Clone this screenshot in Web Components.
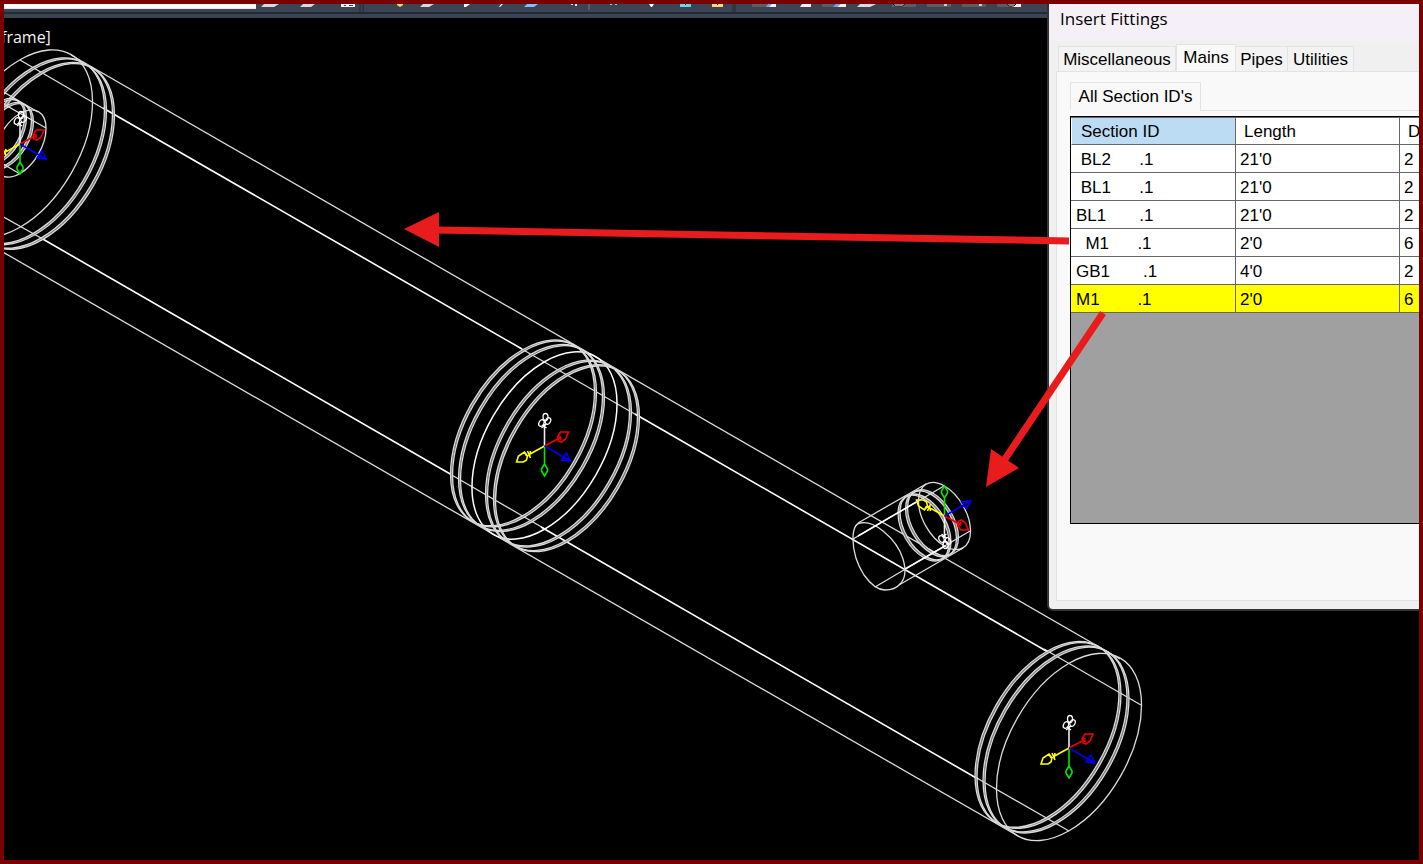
<!DOCTYPE html>
<html lang="en">
<head>
<meta charset="utf-8">
<title>Insert Fittings</title>
<style>
html, body { height: 100%; margin: 0; }
body { background: #000; font-family: "Liberation Sans", Arial, sans-serif; font-size: 17px; }
</style>
</head>
<body>
<cad-app></cad-app>
<script>
const define = (name, html, setup) => customElements.define(name, class extends HTMLElement {
  constructor() {
    super();
    const root = this.attachShadow({ mode: 'open' });
    const t = document.createElement('template');
    t.innerHTML = html;
    root.append(t.content.cloneNode(true));
    if (setup) setup(root, this);
  }
});

define('tool-strip', `
<style>
:host { display: block; position: relative; height: 14px; background: #3b4453; overflow: hidden; }
.row { display: flex; height: 8px; border-bottom: 2px solid #222935; }
input { width: 252px; height: 5px; box-sizing: border-box; border: 0; border-bottom: 1px solid #e8e8e8; padding: 0; background: #fafafa; }
svg { flex: 1; height: 10px; display: block; }
</style>
<div class="row"><input type="text" aria-label="Layer"><svg aria-hidden="true"><g transform="translate(-256 -4)">
  <g fill="#d9d9dc"><path d="M264 4h15l-5 3h-13zM303 4h12l-4 3h-11zM423 4h11l-5 3h-9zM860 4h16l-6 3h-13z"/></g>
  <path d="M341 4h14v3h-14z" fill="#f3f3f3"/><path d="M344 5h2v1h-2zM349 5h4v1h-4z" fill="#444"/>
  <path d="M397 4h6v1l-3 2-3-2z" fill="#ffd27c"/>
  <path d="M464 4h6l-4 3h-2zM501 4h2l-3 3h-1zM649 4h5l-2 3h-1z" fill="#fff"/>
  <path d="M527 4h11l-4 3h-10z" fill="#7cc0ff"/>
  <path d="M571 4h2v1h-2zM575 4h2v2h-2z" fill="#ddd"/>
  <path d="M589 4v6" stroke="#777b82"/>
  <path d="M610 4h2v1h-2zM615 4h2v1h-2zM680 4h11v3h-11z" fill="#64d8ea"/>
  <path d="M712 4h11v3h-11z" fill="#ffd27c"/><path d="M685 4h1v1h-1zM717 4h1v1h-1z" fill="#333"/>
  <g fill="#5d5d60"><path d="M752 4h16v3h-16zM822 4h14v3h-14zM892 4h24v3h-24zM927 4h24v3h-24zM962 4h24v3h-24zM997 4h16v3h-16z"/></g>
  <path d="M771 4h5v3h-9zM802 4h9v3h-11zM840 4h6v3h-9zM1014 4h7v3h-9z" fill="#f0f0f0"/>
  <path d="M768 4h4l-3 3h-3zM836 4h5l-4 3h-4z" fill="#6ea7f4"/>
  <path d="M893 4h12l-2 2h-8zM1007 4h9l-2 2h-5z" fill="#ddd" stroke="#222"/>
  <path d="M944 4h3v2h-3zM979 4h3v2h-3z" fill="#ccc"/>
  <path d="M360 4v10M363 4v10M733 4v10M735 4v10" stroke="#222935"/>
</g></svg></div>`);

const A = 102.6;   // half major axis of the main pipe
const a = 36.8;    // half major axis of the branch pipe
const ring = (cx, cy, r, angle, extra = '') =>
  `<ellipse cx="${cx}" cy="${cy}" rx="${r}" ry="${r * 0.577}" transform="rotate(${angle} ${cx} ${cy})" ${extra}/>`;
const band = (cx, cy, r, angle, offsets) => offsets.map(o =>
  [0, -1, 1].map(k => {
    const dx = o + k, dy = dx * (angle < 0 ? 0.577 : -0.577);
    return ring(cx + dx, cy + dy, r - 0.8, angle, k ? '' : 'stroke="#777"');
  }).join('')).join('');

const triad = `
  <path d="M0 0V-22" stroke="#eee" stroke-width="1.6"/>
  <g stroke="#fff" stroke-width="1.3"><ellipse cx="1" cy="-29" rx="2.5" ry="3.5"/><ellipse cx="3.5" cy="-25" rx="2.5" ry="3.5" transform="rotate(25 3.5 -25)"/><ellipse cx="-3" cy="-23" rx="2.5" ry="3.5" transform="rotate(25 -3 -23)"/><path d="M-3-18l5-4M-2-21l4 3"/></g>
  <path d="M0 0V19M0 18l-3 5v2l3 5 3-5v-2z" stroke="#00e800" stroke-width="1.6"/>
  <path d="M0 0l15-8M24-14l-8 0-3 5 1 4 3 1 4-3zM13-10l3 1 0 3" stroke="#f00000" stroke-width="1.6"/>
  <path d="M0 0l-18 10M-28 16l2-6 6-4 3 4-1 4-3 2zM-17 5l3 7M-14 5l-1 6M-20 6l2 4" stroke="#ff0" stroke-width="1.6"/>
  <path d="M0 0l26 15M26 15l-9-1 5-7zM21 8l-3 6" stroke="#0000f0" stroke-width="1.6"/>`;

define('cad-view', `
<style>
:host { display: block; position: relative; overflow: hidden; background: #000; }
.label { position: absolute; left: 0; top: 7px; color: #f2f2f2; font: 16px/24px "Open Sans", "Noto Sans", sans-serif; text-indent: -3px; }
svg { display: block; width: 100%; height: 100%; }
</style>
<svg fill="none" role="img" aria-label="Pipe wireframe"><g transform="translate(-4 -18)" id="scene"></g></svg>
<span class="label">frame]</span>`, root => {
  root.getElementById('scene').innerHTML = `
  <g stroke="#dcdcdc" stroke-width="1.3">
    <path d="M71 55L1120 659M-32 232L1018 836M20 60L106 110M520 348L640 417M1044 649L1141 705M450 474L545 529M975 777L1069 831M0 215L41 238"/>
    ${ring(20, 143.5, A, -60)}${ring(1069, 747, A, -60)}
  </g>
  <g stroke="#fff" stroke-width="1.6">
    <path d="M103 108L522 349M635 414L1048 652M41 238L452 475M541 527L978 779" />
  </g>
  <g stroke="#fff" stroke-width="1.5">${ring(544.5, 445.5, A, -60)}</g>
  <g stroke="#dcdcdc" stroke-width="1.3">
    ${band(20, 143.5, A, -60, [13.5, 21.5])}
    ${band(544.5, 445.5, A, -60, [-21, -13, 14, 22])}
    ${band(1069, 747, A, -60, [-21, -13])}
    ${band(20, 143.5, a, -60, [-20, -13])}
    ${band(944.5, 516, a, 60, [-20, -12.5])}
    ${ring(20, 143.5, a, -60)}${ring(944.5, 516, a, 60)}
    <path d="M38 112L0 90M46 128L0 102M20 174L0 162"/>
    <path d="M926 484L858 523M963 548L899 585M944 486L853 539M970 531L875 587"/>
    <path d="M853 539C853 531 855 524 860 523C869 521 877 526 883 531C893 539 900 549 903 559C906 569 906 578 900 584C896 589 889 590 885 590C877 590 869 582 864 575C857 564 853 550 853 539Z"/>
  </g>
  <path d="M918 501L858 536M945 546L905 569" stroke="#fff" stroke-width="1.5"/>
  <g transform="translate(20 144)">${triad}</g>
  <g transform="translate(544.5 446)">${triad}</g>
  <g transform="translate(1069 748)">${triad}</g>
  <g transform="translate(944.5 516) scale(1 -1)">${triad}</g>`;
});

define('tab-item', `
<style>
:host { display: block; }
button { box-sizing: border-box; display: block; width: 100%; height: 25px; margin: 0; padding: 0 4px; border: 1px solid #e3e3e3; border-bottom: 0; border-left-width: 0; background: #f3f3f3; color: #000; font: inherit; line-height: 26px; text-align: center; white-space: nowrap; }
:host([selected]) button { height: 27px; background: #f9f9f9; border-left-width: 1px; line-height: 24px; }
:host([sub]) button { height: 28px; line-height: 24px; }
:host([first]) button { border-left-width: 1px; }
</style>
<button type="button" role="tab"><slot></slot></button>`, (root, el) => {
  root.querySelector('button').setAttribute('aria-selected', el.hasAttribute('selected'));
});

define('section-grid', `
<style>
:host { display: block; overflow: hidden; height: 406px; border: 1px solid #000; border-right: 0; background: #a0a0a0; }
table { width: 492px; border-collapse: separate; border-spacing: 0; table-layout: fixed; border-top: 1px solid #666; }
th, td { box-sizing: border-box; width: 164px; height: 28px; padding: 2px 4px 0; border-right: 1px solid #666; border-bottom: 1px solid #666; background: #fff; font-weight: 400; text-align: left; white-space: pre; line-height: 20px; color: #000; }
th { height: 27px; padding: 2px 8px 0; }
th:first-child { background: #bbdcf2; padding-left: 9px; border-left: 1px solid #fff; }
th:first-child, td:first-child { width: 165px; padding-right: 0; }
td:first-child { padding-left: 5px; }
.picked td { background: #ff0; }
</style>
<table>
<thead><tr><th scope="col">Section ID</th><th scope="col">Length</th><th scope="col">D</th></tr></thead>
<tbody>
<tr><td> BL2      .1</td><td>21'0</td><td>2</td></tr>
<tr><td> BL1      .1</td><td>21'0</td><td>2</td></tr>
<tr><td>BL1       .1</td><td>21'0</td><td>2</td></tr>
<tr><td>  M1      .1</td><td>2'0</td><td>6</td></tr>
<tr><td>GB1       .1</td><td>4'0</td><td>2</td></tr>
<tr class="picked"><td>M1        .1</td><td>2'0</td><td>6</td></tr>
</tbody></table>`);

define('fittings-dialog', `
<style>
:host { display: block; box-sizing: border-box; overflow: hidden; border: 2px solid #333; border-width: 0 0 2px 2px; border-radius: 0 0 0 6px; background: #f0f0f0; color: #000; }
h1 { margin: 0; height: 37px; padding-left: 11px; background: #f5f0f8; font: 17px/30px "Open Sans", "Noto Sans", sans-serif; }
.tabs { display: flex; align-items: flex-end; height: 30px; padding-left: 9px; }
.tabs tab-item:nth-child(1) { width: 118px; }
.tabs tab-item:nth-child(2) { width: 60px; }
.tabs tab-item:nth-child(3) { width: 52px; }
.tabs tab-item:nth-child(4) { width: 66px; }
.page { margin-left: 7px; padding: 10px 0 76px 13px; border: 1px solid #e3e3e3; border-right: 0; background: #f9f9f9; margin-bottom: 8px; }
.sub { display: flex; width: 131px; }
.sub tab-item { width: 131px; }
.line { height: 5px; margin-left: 130px; border-top: 1px solid #e3e3e3; }
</style>
<h1>Insert Fittings</h1>
<div class="tabs" role="tablist">
<tab-item first>Miscellaneous</tab-item><tab-item selected>Mains</tab-item><tab-item>Pipes</tab-item><tab-item>Utilities</tab-item>
</div>
<div class="page">
<div class="sub" role="tablist"><tab-item selected sub>All Section ID's</tab-item></div>
<div class="line"></div>
<section-grid></section-grid>
</div>`);

define('callout-arrows', `
<style>
:host { display: block; pointer-events: none; }
svg { display: block; width: 100%; height: 100%; }
</style>
<svg aria-hidden="true"><g transform="translate(-4 -4)" fill="#e81c1c" stroke="#e81c1c">
<path d="M1069 241L436 230M1103 313L1003 462" stroke-width="7"/>
<path d="M404 229L439 212V247ZM986 487L991 449 1019 468Z" stroke="none"/>
</g></svg>`);

define('cad-app', `
<style>
:host { display: grid; grid-template-rows: auto 1fr; position: relative; box-sizing: border-box; height: 100vh; overflow: hidden; border: 4px solid #7b0000; background: #000; }
fittings-dialog { position: absolute; top: 0; right: 0; width: 372px; }
callout-arrows { position: absolute; inset: 0; }
</style>
<tool-strip></tool-strip>
<cad-view></cad-view>
<fittings-dialog></fittings-dialog>
<callout-arrows></callout-arrows>`);
</script>
</body>
</html>
